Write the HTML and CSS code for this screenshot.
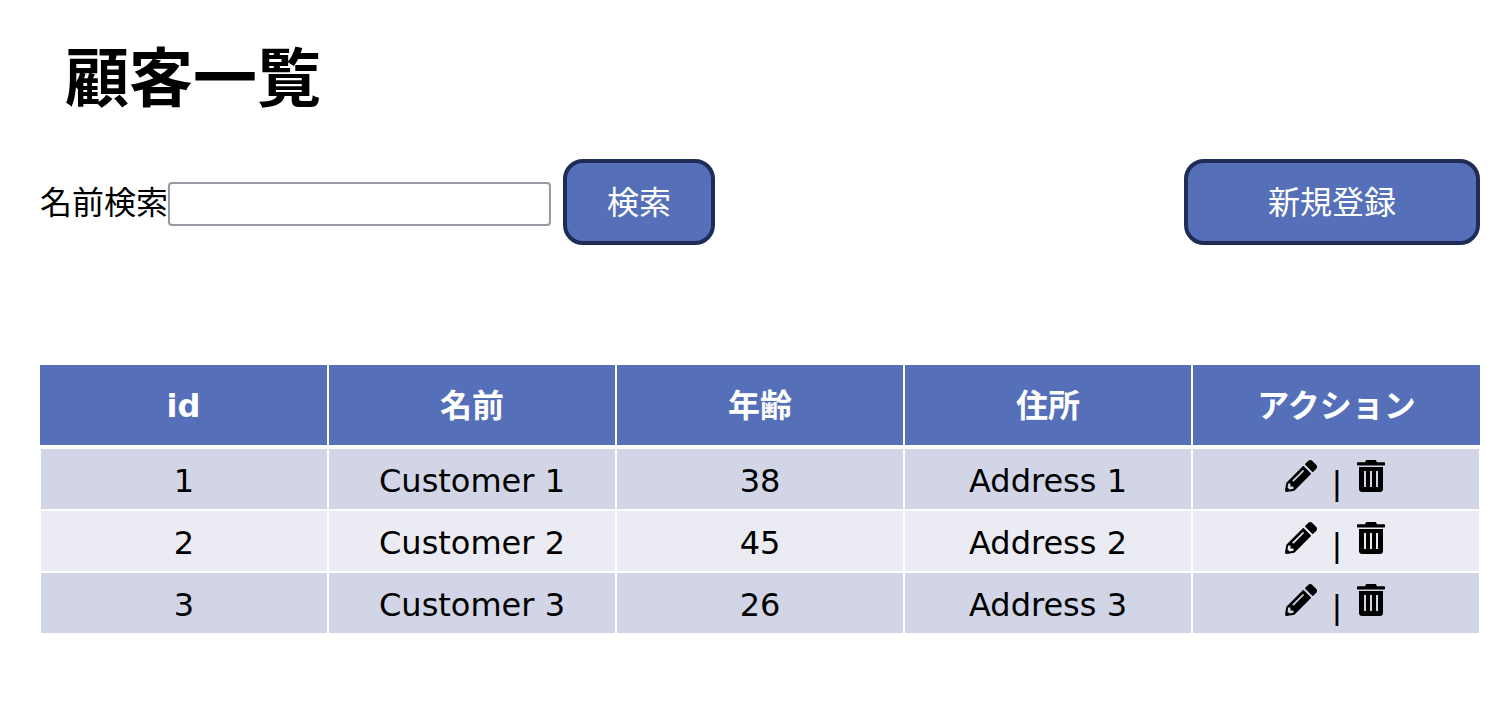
FILE: index.html
```html
<!DOCTYPE html>
<html lang="ja">
<head>
<meta charset="utf-8">
<title>顧客一覧</title>
<link rel="stylesheet" href="styles.css">
</head>
<body>
<main class="page">
  <h1 class="title">顧客一覧</h1>
  <div class="toolbar">
    <form class="search">
      <label class="search-label" for="q">名前検索</label>
      <input class="search-input" id="q" type="text">
      <button class="btn btn-search" type="button">検索</button>
    </form>
    <button class="btn btn-new" type="button">新規登録</button>
  </div>
  <table class="customers">
    <thead>
      <tr><th class="th-latin">id</th><th>名前</th><th>年齢</th><th>住所</th><th>アクション</th></tr>
    </thead>
    <tbody>
      <tr>
        <td>1</td><td>Customer 1</td><td>38</td><td>Address 1</td>
        <td><span class="actions"><svg class="icon icon-pencil" viewBox="0 0 512 512"><use href="#pencil"/></svg> | <svg class="icon icon-trash" viewBox="0 0 448 512"><use href="#trash"/></svg></span></td>
      </tr>
      <tr>
        <td>2</td><td>Customer 2</td><td>45</td><td>Address 2</td>
        <td><span class="actions"><svg class="icon icon-pencil" viewBox="0 0 512 512"><use href="#pencil"/></svg> | <svg class="icon icon-trash" viewBox="0 0 448 512"><use href="#trash"/></svg></span></td>
      </tr>
      <tr>
        <td>3</td><td>Customer 3</td><td>26</td><td>Address 3</td>
        <td><span class="actions"><svg class="icon icon-pencil" viewBox="0 0 512 512"><use href="#pencil"/></svg> | <svg class="icon icon-trash" viewBox="0 0 448 512"><use href="#trash"/></svg></span></td>
      </tr>
    </tbody>
  </table>
</main>
<svg class="defs" width="0" height="0">
  <defs>
    <path id="pencil" d="M497.9 142.1l-46.1 46.1c-4.7 4.7-12.3 4.7-17 0l-111-111c-4.7-4.7-4.7-12.3 0-17l46.1-46.1c18.7-18.7 49.1-18.7 67.9 0l60.1 60.1c18.8 18.7 18.8 49.1 0 67.9zM284.2 99.8L21.6 362.4.4 483.9c-2.9 16.4 11.4 30.6 27.8 27.8l121.5-21.3 262.6-262.6c4.7-4.7 4.7-12.3 0-17l-111-111c-4.8-4.7-12.4-4.7-17.1 0zM124.1 339.9c-5.5-5.5-5.5-14.3 0-19.8l154-154c5.5-5.5 14.3-5.5 19.8 0s5.5 14.3 0 19.8l-154 154c-5.5 5.5-14.3 5.5-19.8 0zM88 424h48v36.3l-64.5 11.3-31.1-31.1L51.7 376H88v48z"/>
    <path id="trash" fill-rule="evenodd" d="M160 0h128c12 0 22 8 26 24l3 10h115c9 0 16 7 16 16v24c0 6-5 12-12 12H12C5 86 0 80 0 74V50c0-9 7-16 16-16h115l3-10C138 8 148 0 160 0zM32 112h384v352c0 27-21 48-48 48H80c-27 0-48-21-48-48zM112 176v256h32V176zM208 176v256h32V176zM304 176v256h32V176z"/>
  </defs>
</svg>
</body>
</html>
```

FILE: styles.css
```css
* {
  box-sizing: border-box;
}

body {
  margin: 0;
  background: #fff;
  color: #000;
  font-family: "DejaVu Sans", "Noto Sans CJK JP", sans-serif;
}

.page {
  padding: 26px 27px 0 40px;
}

.title {
  margin: 0;
  padding-left: 25px;
  font-family: "Noto Sans CJK JP", sans-serif;
  font-size: 64px;
  font-weight: 700;
  line-height: 94px;
}

.toolbar {
  display: flex;
  justify-content: space-between;
  align-items: center;
  margin-top: 39px;
}

.search {
  display: flex;
  align-items: center;
}

.search-label {
  width: 128px;
  padding-bottom: 4px;
  font-family: "Noto Sans CJK JP", sans-serif;
  font-size: 32px;
  line-height: 44px;
}

.search-input {
  width: 383px;
  height: 44px;
  margin-top: 4px;
  border: 2px solid #9a9aa6;
  border-radius: 4px;
  background: #fff;
}

.btn {
  height: 86px;
  padding: 0 0 4px;
  border: 4px solid #1f2d56;
  border-radius: 20px;
  background: #5570b9;
  color: #fff;
  font-family: "Noto Sans CJK JP", sans-serif;
  font-size: 32px;
}

.btn-search {
  width: 152px;
  margin-left: 12px;
}

.btn-new {
  width: 296px;
}

.customers {
  width: 1440px;
  margin-top: 120px;
  border-collapse: separate;
  border-spacing: 0;
  table-layout: fixed;
  font-size: 32px;
  text-align: center;
}

.customers th {
  height: 83px;
  padding: 0 0 4px;
  background: #5570b9;
  color: #fff;
  font-weight: 700;
  border-left: 1px solid #fff;
  border-right: 1px solid #fff;
  border-bottom: 3px solid #fff;
}

.customers .th-latin {
  padding: 2px 0 0;
}

.customers th:first-child {
  border-left: 0;
}

.customers th:last-child {
  border-right: 0;
}

.customers td {
  height: 62px;
  padding: 4px 0 0;
  background: #d1d5e6;
  border: 1px solid #fff;
}

.customers tbody tr:nth-child(even) td {
  background: #eaebf3;
}

.actions {
  white-space: nowrap;
}

.icon {
  height: 32px;
  fill: #000;
  vertical-align: 2px;
}

.icon-pencil {
  width: 32px;
  margin-right: 4px;
}

.icon-trash {
  width: 28px;
  margin-left: 4px;
  margin-right: 2px;
}

.defs {
  position: absolute;
}
```
